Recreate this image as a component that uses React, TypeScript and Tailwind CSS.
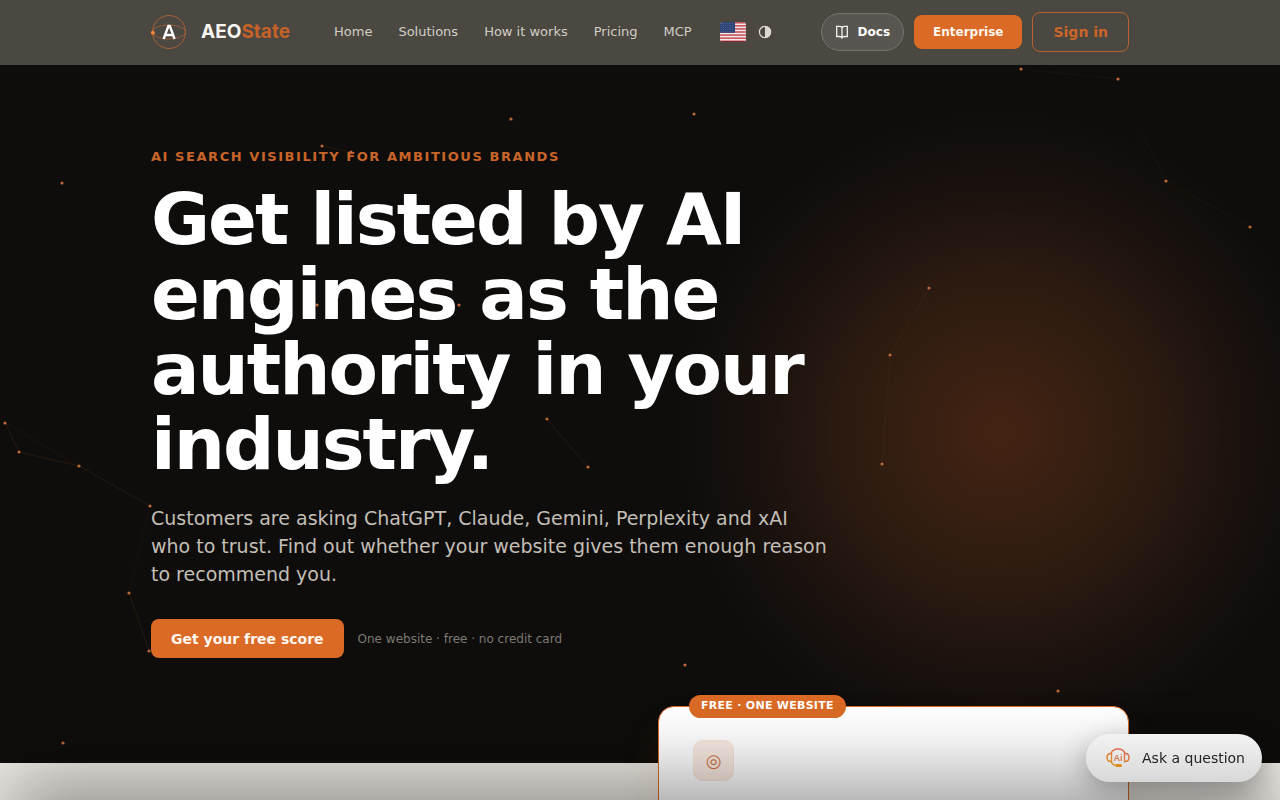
import type { ReactElement } from "react";

type Point = [number, number];

const NAV_LINKS = ["Home", "Solutions", "How it works", "Pricing", "MCP"];

const PARTICLES: Point[] = [
  [1021, 69], [1118, 79], [511, 119], [694, 114], [322, 146], [351, 152], [62, 183],
  [1166, 181], [1250, 227], [929, 288], [890, 355], [882, 464], [317, 305], [459, 305],
  [547, 419], [588, 467], [5, 423], [19, 452], [79, 466], [150, 506], [129, 593],
  [149, 651], [685, 665], [1058, 691], [63, 743],
];

const STRONG_LINKS: [Point, Point][] = [
  [[5, 423], [19, 452]],
  [[19, 452], [79, 466]],
  [[79, 466], [150, 506]],
  [[129, 593], [149, 651]],
  [[547, 419], [588, 467]],
  [[322, 146], [351, 152]],
];

const FAINT_LINKS: [Point, Point][] = [
  [[5, 423], [79, 466]],
  [[150, 506], [129, 593]],
  [[929, 288], [890, 355]],
  [[890, 355], [882, 464]],
  [[1021, 69], [1118, 79]],
  [[1166, 181], [1250, 227]],
  [[1140, 130], [1166, 181]],
];

/** Show the orbiting logo mark. */
function LogoMark(): ReactElement {
  return (
    <svg width="36" height="36" viewBox="0 0 36 36" fill="none" aria-hidden="true">
      <circle cx="18" cy="18" r="16.5" stroke="#a86238" />
      <ellipse cx="18" cy="18" rx="16.5" ry="7" stroke="#97593a" />
      <path d="M12.600 25 17.400 12h1.400l4.800 13M14.400 21h7.400" stroke="#fff" strokeWidth="2.400" />
      <circle cx="1.900" cy="18.800" r="2" fill="#ee8336" />
    </svg>
  );
}

/** Show the language flag. */
function UsFlag(): ReactElement {
  return (
    <svg width="26" height="20" viewBox="0 0 26 20" aria-hidden="true">
      <defs>
        <clipPath id="flag-shape">
          <rect width="26" height="20" rx="3" />
        </clipPath>
      </defs>
      <g clipPath="url(#flag-shape)">
        <rect width="26" height="20" fill="#f3e9e9" />
        {[0, 2, 4, 6, 8, 10, 12].map((stripe) => (
          <rect key={stripe} y={(stripe * 20) / 13} width="26" height="1.54" fill="#c4505a" />
        ))}
        <rect width="15" height="10.8" fill="#2e4378" />
        {[1.5, 3.5, 5.5, 7.5, 9.3].map((y) => (
          <path key={y} d={`M1 ${y}h13`} stroke="#7284b0" strokeWidth=".6" strokeDasharray=".8 1.4" />
        ))}
        <rect y="19" width="26" height="1" fill="#7e2a30" />
      </g>
    </svg>
  );
}

function ContrastIcon(): ReactElement {
  return (
    <svg width="14" height="14" viewBox="0 0 14 14" fill="none" aria-hidden="true">
      <circle cx="7" cy="7" r="5.600" stroke="#dcd8d0" strokeWidth="1.300" />
      <path d="M7 1a6 6 0 0 1 0 12z" fill="#dcd8d0" />
    </svg>
  );
}

function BookIcon(): ReactElement {
  return (
    <svg width="14" height="14" viewBox="0 0 14 14" fill="none" stroke="#f4f1ec" strokeWidth="1.300" aria-hidden="true">
      <path d="M7 2.500Q6 1.300 4.500 1.300H1.700v10.200h2.800Q6.200 11.500 7 12.800 7.800 11.500 9.500 11.500h2.800V1.300H9.500Q8 1.300 7 2.500zM7 2.500V13" />
    </svg>
  );
}

function AssistantIcon(): ReactElement {
  return (
    <svg width="24" height="20" viewBox="0 0 24 20" fill="none" strokeWidth="1.400" aria-hidden="true">
      <defs>
        <linearGradient id="assistant-tone" x1="18" y1="0" x2="8" y2="20" gradientUnits="userSpaceOnUse">
          <stop stopColor="#dd6458" />
          <stop offset="1" stopColor="#dd951c" />
        </linearGradient>
      </defs>
      <g stroke="url(#assistant-tone)">
        <path d="M5 5.500Q6.500 1 12 1t7 4.500M5 13.500Q6.500 17 10 17.500" />
        <path d="M5.500 5.500H4Q1 6 1 9.500T4 13.500h1.500zM18.500 5.500H20Q23 6 23 9.500T20 13.500h-1.500z" />
      </g>
      <rect x="9.500" y="16" width="6.500" height="3" rx="1.500" fill="#dd8a14" />
      <text x="12" y="13" textAnchor="middle" fontSize="9" fontWeight="700" fill="#d97a50" className="font-['Liberation_Sans',sans-serif]">
        Ai
      </text>
    </svg>
  );
}

function ParticleField(): ReactElement {
  return (
    <svg className="absolute top-0 left-0" width="1280" height="763" fill="none" aria-hidden="true">
      <g stroke="#df6a25" strokeOpacity=".12">
        {STRONG_LINKS.map(([a, b]) => (
          <path key={`${a}-${b}`} d={`M${a}L${b}`} />
        ))}
      </g>
      <g stroke="#df6a25" strokeOpacity=".06">
        {FAINT_LINKS.map(([a, b]) => (
          <path key={`${a}-${b}`} d={`M${a}L${b}`} />
        ))}
      </g>
      {PARTICLES.map(([x, y]) => (
        <circle key={`${x}-${y}`} cx={x} cy={y} r="1.600" fill="#b9683a" />
      ))}
    </svg>
  );
}

function SiteHeader(): ReactElement {
  return (
    <header className="relative z-10 border-b border-[#4b4741] bg-[#4b4741]">
      <div className="mx-auto flex h-16 max-w-[978px] items-center">
        <a href="#home" className="flex items-center gap-[14px]">
          <LogoMark />
          <span className="font-[Inter,sans-serif] text-[19px] leading-6 font-bold text-[#f7f5f2]">
            AEO<span className="text-[#c66228]">State</span>
          </span>
        </a>
        <nav className="ml-11 flex items-center gap-[26px] text-[13px] text-[#d2cec6]">
          {NAV_LINKS.map((label) => (
            <a key={label} href={`#${label}`}>
              {label}
            </a>
          ))}
        </nav>
        <button type="button" aria-label="Language" className="ml-7">
          <UsFlag />
        </button>
        <button type="button" aria-label="Toggle theme" className="ml-3">
          <ContrastIcon />
        </button>
        <div className="ml-auto flex items-center gap-2.5 font-bold">
          <a href="#docs" className="flex h-[38px] items-center gap-[9px] rounded-full border border-[#76726c] bg-[#595550] px-[13px] text-xs text-white">
            <BookIcon />
            Docs
          </a>
          <a href="#enterprise" className="flex h-[34px] items-center rounded-lg bg-[#da6a25] px-[19px] text-xs text-[#fff6ee]">
            Enterprise
          </a>
          <a href="#sign-in" className="flex h-10 items-center rounded-lg border border-[#b8622f] px-5 text-sm text-[#cb6528]">
            Sign in
          </a>
        </div>
      </div>
    </header>
  );
}

function Hero(): ReactElement {
  return (
    <section className="relative mx-auto max-w-[978px] pt-[84px] pb-[105px]">
      <div className="max-w-[680px]">
        <p className="text-[13px] leading-4 font-bold tracking-[0.12em] text-[#c96529] uppercase">
          AI search visibility for ambitious brands
        </p>
        <h1 className="mt-[17px] text-[72px] leading-[75px] font-bold tracking-[-2px] text-white">
          Get listed by AI engines as the authority in your industry.
        </h1>
        <p className="mt-[22px] text-[19px] leading-7 text-[#c3beb6]">
          Customers are asking ChatGPT, Claude, Gemini, Perplexity and xAI who to trust. Find out whether your website gives them enough reason to recommend you.
        </p>
        <div className="mt-[31px] flex items-center gap-[14px]">
          <button type="button" className="h-[39px] rounded-lg bg-[#da6a25] px-5 text-sm font-bold text-[#fff6ee]">
            Get your free score
          </button>
          <span className="text-xs text-[#7d7973]">One website · free · no credit card</span>
        </div>
      </div>
    </section>
  );
}

function ScoreCard(): ReactElement {
  return (
    <article className="relative h-[420px] rounded-2xl border border-[#da6a25] bg-white px-[34px] pt-[33px] shadow-[0_24px_40px_rgba(218,106,37,0.1)]">
      <span className="absolute -top-3 left-[30px] flex h-[23px] items-center rounded-full bg-[#da6a25] px-3 text-[11px] font-bold tracking-wide text-white">
        FREE · ONE WEBSITE
      </span>
      <span className="flex size-[41px] items-center justify-center rounded-[10px] border border-[#f5e4da] bg-[#f9ebe2] text-lg text-[#d0743f]">
        ◎
      </span>
      <h2 className="mt-5 text-2xl leading-6 font-bold text-[#171512]">AEO score, free</h2>
    </article>
  );
}

export default function App(): ReactElement {
  return (
    <div className="relative h-screen overflow-hidden bg-[#eeece6] font-['DejaVu_Sans',sans-serif]">
      <div className="relative overflow-hidden bg-[#0e0d0b]">
        <div className="absolute top-28 -right-10 size-[640px] rounded-full bg-[radial-gradient(circle_closest-side,#442413,#2b1a10_50%,#1a120e_76%,#0e0d0b)]" />
        <ParticleField />
        <SiteHeader />
        <Hero />
      </div>
      <section className="relative -mt-[57px]">
        <div className="mx-auto flex max-w-[978px] justify-end">
          <div className="w-[471px]">
            <ScoreCard />
          </div>
        </div>
      </section>
      <div className="pointer-events-none fixed inset-x-2 top-full h-40 shadow-[0_-20px_80px_rgba(0,0,0,0.4)]" />
      <button type="button" className="fixed right-[18px] bottom-[18px] flex h-12 items-center gap-3 rounded-full bg-linear-to-b from-[#f3f3f3] to-[#d8d8d8] pr-[17px] pl-5 text-sm text-[#252320] shadow-[0_8px_28px_rgba(0,0,0,0.3)]">
        <AssistantIcon />
        Ask a question
      </button>
    </div>
  );
}
